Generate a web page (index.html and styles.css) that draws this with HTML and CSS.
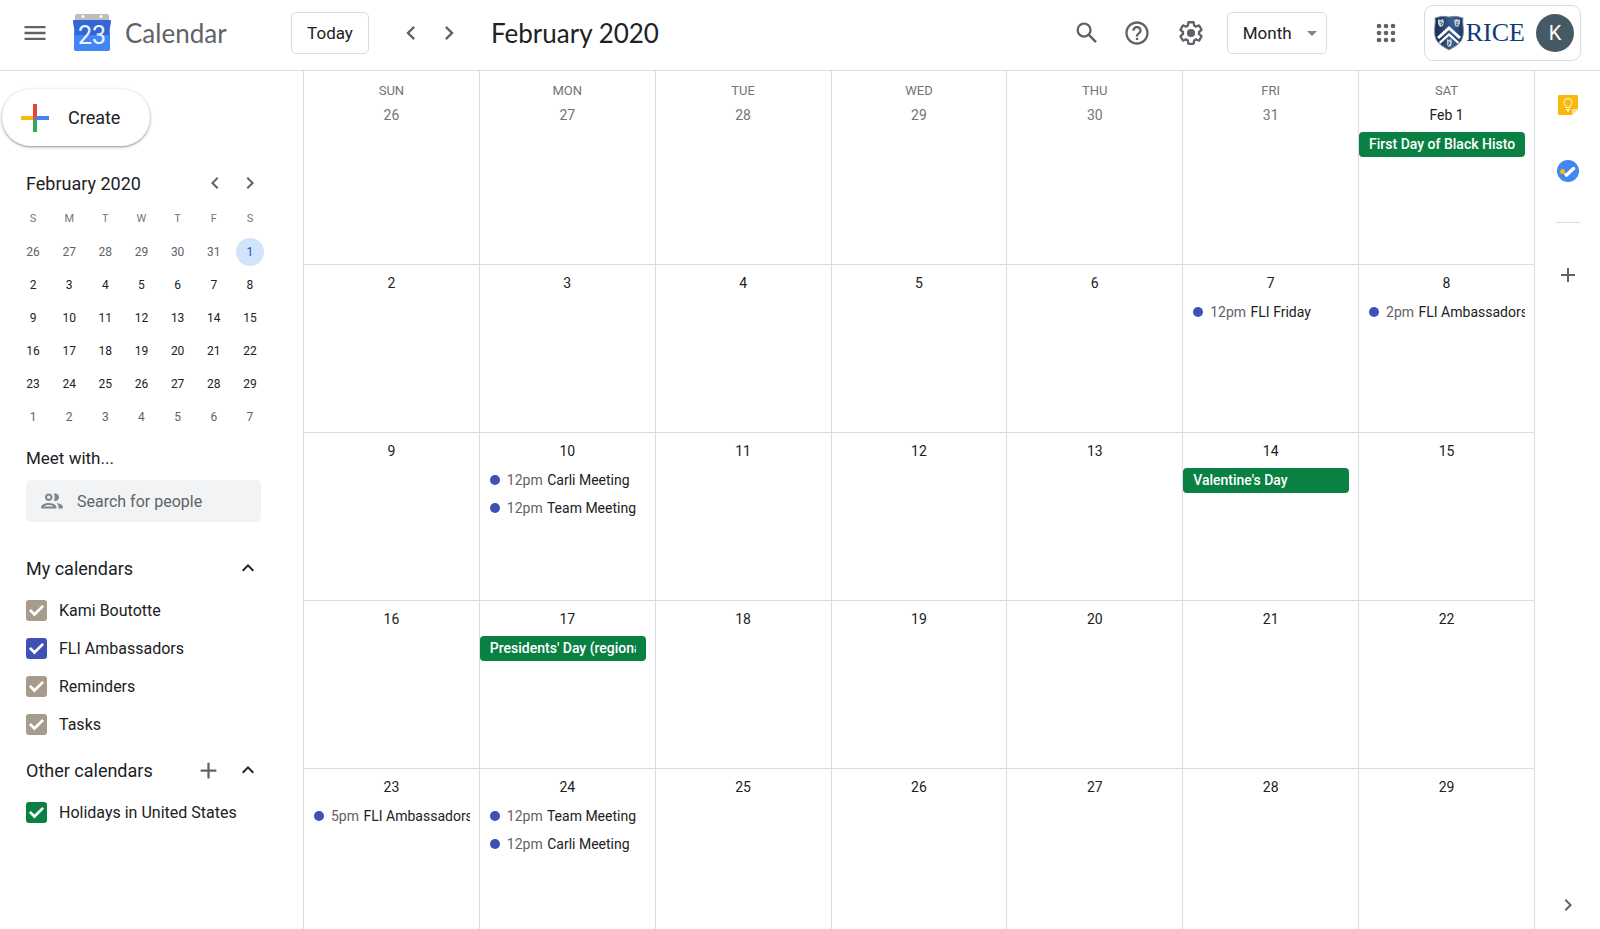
FILE: index.html
```html
<!DOCTYPE html>
<html lang="en">

<head>
    <meta charset="UTF-8">
    <meta name="viewport" content="width=device-width, initial-scale=1.0">
    <title>Calendar - February 2020</title>
    <link rel="stylesheet" href="styles.css">
</head>

<body>

    <header class="topbar">
        <div class="brand">
            <button class="icon-btn" aria-label="Main menu">
                <svg width="28" height="28" viewBox="0 0 24 24"><path d="M3 18h18v-2H3v2zm0-5h18v-2H3v2zm0-7v2h18V6H3z"/></svg>
            </button>
            <svg class="logo" width="40" height="40" viewBox="0 0 40 40">
                <path d="M5 1h30a2 2 0 0 1 2 2v6H3V3a2 2 0 0 1 2-2z" fill="#bdbdbd"/>
                <circle cx="11" cy="3.500" r="1.500" fill="#fff"/>
                <circle cx="29" cy="3.500" r="1.500" fill="#fff"/>
                <path d="M2 7h36a1 1 0 0 1 1 1c0 4-2 7-1 14H2C3 15 1 12 1 8a1 1 0 0 1 1-1z" fill="#3367d6"/>
                <path d="M2 22h36v14a2 2 0 0 1-2 2H4a2 2 0 0 1-2-2z" fill="#4285f4"/>
                <text class="logo-day" x="20" y="31" text-anchor="middle">23</text>
            </svg>
            <span class="brand-name">Calendar</span>
        </div>

        <button class="box-btn">Today</button>
        <div class="pager">
            <button class="icon-btn" aria-label="Previous month">
                <svg width="28" height="28" viewBox="0 0 24 24"><path d="M15.410 7.410L14 6l-6 6 6 6 1.410-1.410L10.830 12z"/></svg>
            </button>
            <button class="icon-btn" aria-label="Next month">
                <svg width="28" height="28" viewBox="0 0 24 24"><path d="M10 6L8.590 7.410 13.170 12l-4.580 4.590L10 18l6-6z"/></svg>
            </button>
        </div>
        <h1>February 2020</h1>

        <div class="tools">
            <button class="icon-btn" aria-label="Search">
                <svg width="28" height="28" viewBox="0 0 24 24"><path d="M20.490 19l-5.730-5.730C15.530 12.200 16 10.910 16 9.500A6.500 6.500 0 1 0 9.500 16c1.410 0 2.700-.47 3.770-1.240L19 20.490 20.490 19zM5 9.500C5 7.010 7.010 5 9.500 5S14 7.010 14 9.500 11.990 14 9.500 14 5 11.990 5 9.500z"/></svg>
            </button>
            <button class="icon-btn" aria-label="Support">
                <svg width="28" height="28" viewBox="0 0 24 24"><path d="M11 18h2v-2h-2v2zm1-16C6.480 2 2 6.480 2 12s4.480 10 10 10 10-4.480 10-10S17.520 2 12 2zm0 18c-4.410 0-8-3.590-8-8s3.590-8 8-8 8 3.590 8 8-3.590 8-8 8zm0-14c-2.210 0-4 1.790-4 4h2c0-1.100.9-2 2-2s2 .9 2 2c0 2-3 1.750-3 5h2c0-2.250 3-2.500 3-5 0-2.210-1.790-4-4-4z"/></svg>
            </button>
            <button class="icon-btn settings" aria-label="Settings">
                <svg width="28" height="28" viewBox="0 0 24 24"><path d="M13.850 22.250h-3.700c-.74 0-1.360-.54-1.450-1.270l-.27-1.890c-.27-.14-.53-.29-.79-.46l-1.800.72c-.7.26-1.470-.03-1.810-.65L2.200 15.530c-.35-.66-.2-1.440.36-1.880l1.530-1.190c-.01-.15-.02-.3-.02-.46 0-.15.01-.31.02-.46l-1.520-1.190c-.59-.45-.74-1.260-.37-1.880l1.850-3.190c.34-.62 1.110-.9 1.790-.63l1.810.73c.26-.17.52-.32.78-.46l.27-1.910c.09-.7.71-1.250 1.440-1.250h3.700c.74 0 1.360.54 1.450 1.270l.27 1.890c.27.14.53.29.79.46l1.800-.72c.71-.26 1.480.03 1.820.65l1.840 3.180c.36.66.2 1.440-.36 1.880l-1.520 1.190c.01.15.02.3.02.46s-.01.31-.02.46l1.520 1.190c.56.45.72 1.230.37 1.860l-1.860 3.220c-.34.62-1.110.9-1.800.63l-1.800-.72c-.26.17-.52.32-.78.46l-.27 1.910c-.1.68-.72 1.220-1.460 1.220zm-3.230-2h2.760l.37-2.550.53-.22c.44-.18.88-.44 1.340-.78l.45-.34 2.380.96 1.380-2.400-2.030-1.580.07-.56c.03-.26.06-.51.06-.78s-.03-.53-.06-.78l-.07-.56 2.030-1.580-1.390-2.400-2.390.96-.45-.35c-.42-.32-.87-.58-1.330-.77l-.52-.22-.37-2.550h-2.760l-.37 2.550-.53.21c-.44.19-.88.44-1.340.79l-.45.33-2.380-.95-1.390 2.390 2.030 1.580-.07.56a7 7 0 0 0-.06.79c0 .26.02.53.06.78l.07.56-2.030 1.580 1.380 2.400 2.390-.96.45.35c.43.33.86.58 1.330.77l.53.22.38 2.550z"/><circle cx="12" cy="12" r="3.500"/></svg>
            </button>
            <div class="view-select">
                <select aria-label="View">
                    <option>Day</option>
                    <option>Week</option>
                    <option selected>Month</option>
                    <option>Year</option>
                </select>
                <svg width="10" height="5" viewBox="0 0 10 5"><path d="M0 0h10L5 5z"/></svg>
            </div>
            <button class="icon-btn apps" aria-label="Apps">
                <svg width="28" height="28" viewBox="0 0 24 24"><circle cx="6" cy="6" r="2"/><circle cx="12" cy="6" r="2"/><circle cx="18" cy="6" r="2"/><circle cx="6" cy="12" r="2"/><circle cx="12" cy="12" r="2"/><circle cx="18" cy="12" r="2"/><circle cx="6" cy="18" r="2"/><circle cx="12" cy="18" r="2"/><circle cx="18" cy="18" r="2"/></svg>
            </button>
            <a class="account" href="#">
                <svg width="30" height="36" viewBox="0 0 30 36">
                    <defs>
                        <linearGradient id="shield" x1="0" y1="0" x2="1" y2="0">
                            <stop offset="0" stop-color="#16294f"/>
                            <stop offset=".6" stop-color="#3b5f8f"/>
                            <stop offset="1" stop-color="#1d3560"/>
                        </linearGradient>
                    </defs>
                    <path d="M1 3Q8 0 15 2Q22 0 29 3C28 9 31 17 28 24C26 29 20 32 15 35C10 32 4 29 2 24C-1 17 2 9 1 3z" fill="url(#shield)" stroke="#7d8ba3"/>
                    <path d="M3 22L15 11L27 22L25 24L15 15L5 24z" fill="#fff"/>
                    <path d="M5 27L15 18L25 27L24 29L15 21L6 29z" fill="#fff"/>
                    <path d="M4 4l2 1 3-1 1 3-1 4-3 1-2-3zM20 5l3-1 2 1 1-1 0 4-2 4-3-1zM13 24l2 1 2-1 1 3-1 4-2 1-2-2z" fill="#c3c9d2"/>
                    <path d="M6 7l2 1M7 10l2-2M22 8l2-1M22 10l2-1M14 27l2 1M14 30l2-2" stroke="#3c4b66" fill="none"/>
                </svg>
                <span class="school">RICE</span>
                <span class="avatar">K</span>
            </a>
        </div>
    </header>

    <div class="page">

        <aside class="sidebar">
            <button class="create">
                <svg width="28" height="28" viewBox="0 0 28 28">
                    <path d="M12 0h4v12l-4 4z" fill="#ea4335"/>
                    <path d="M0 12h12v4H0z" fill="#fbbc04"/>
                    <path d="M12 16l4-4v16h-4z" fill="#34a853"/>
                    <path d="M16 12h12v4H12z" fill="#4285f4"/>
                    <path d="M12 12h4l-4 4z" fill="#ea4335"/>
                </svg>
                Create
            </button>

            <div class="side-head mini-head">
                <h2>February 2020</h2>
                <button class="icon-btn" aria-label="Previous month">
                    <svg width="24" height="24" viewBox="0 0 24 24"><path d="M15.410 7.410L14 6l-6 6 6 6 1.410-1.410L10.830 12z"/></svg>
                </button>
                <button class="icon-btn" aria-label="Next month">
                    <svg width="24" height="24" viewBox="0 0 24 24"><path d="M10 6L8.590 7.410 13.170 12l-4.580 4.590L10 18l6-6z"/></svg>
                </button>
            </div>

            <table class="mini">
                <thead>
                    <tr><th>S</th><th>M</th><th>T</th><th>W</th><th>T</th><th>F</th><th>S</th></tr>
                </thead>
                <tbody>
                    <tr><td class="other">26</td><td class="other">27</td><td class="other">28</td><td class="other">29</td><td class="other">30</td><td class="other">31</td><td><span class="picked">1</span></td></tr>
                    <tr><td>2</td><td>3</td><td>4</td><td>5</td><td>6</td><td>7</td><td>8</td></tr>
                    <tr><td>9</td><td>10</td><td>11</td><td>12</td><td>13</td><td>14</td><td>15</td></tr>
                    <tr><td>16</td><td>17</td><td>18</td><td>19</td><td>20</td><td>21</td><td>22</td></tr>
                    <tr><td>23</td><td>24</td><td>25</td><td>26</td><td>27</td><td>28</td><td>29</td></tr>
                    <tr><td class="other">1</td><td class="other">2</td><td class="other">3</td><td class="other">4</td><td class="other">5</td><td class="other">6</td><td class="other">7</td></tr>
                </tbody>
            </table>

            <label class="meet" for="people">Meet with...</label>
            <div class="people">
                <svg width="26" height="26" viewBox="0 0 24 24"><path d="M9 13.750c-2.340 0-7 1.170-7 3.500V19h14v-1.750c0-2.330-4.660-3.500-7-3.500zM4.340 17c.84-.58 2.870-1.250 4.660-1.250s3.820.67 4.660 1.250H4.340zM9 12c1.930 0 3.500-1.570 3.500-3.500S10.930 5 9 5 5.500 6.570 5.500 8.500 7.070 12 9 12zm0-5c.83 0 1.500.67 1.500 1.500S9.830 10 9 10s-1.500-.67-1.500-1.500S8.170 7 9 7zm7.040 6.810c1.160.84 1.960 1.960 1.960 3.440V19h4v-1.750c0-2.020-3.500-3.170-5.960-3.440zM15 12c1.930 0 3.500-1.570 3.500-3.500S16.930 5 15 5c-.54 0-1.040.13-1.500.35.63.89 1 1.980 1 3.150s-.37 2.260-1 3.150c.46.22.96.35 1.500.35z"/></svg>
                <input type="text" id="people" placeholder="Search for people">
            </div>

            <div class="side-head">
                <h2>My calendars</h2>
                <button class="icon-btn dark" aria-label="Collapse my calendars">
                    <svg width="24" height="24" viewBox="0 0 24 24"><path d="M12 8l-6 6 1.410 1.410L12 10.830l4.590 4.580L18 14z"/></svg>
                </button>
            </div>
            <ul class="calendars">
                <li><label><input type="checkbox" class="tan" checked>Kami Boutotte</label></li>
                <li><label><input type="checkbox" class="blue" checked>FLI Ambassadors</label></li>
                <li><label><input type="checkbox" class="tan" checked>Reminders</label></li>
                <li><label><input type="checkbox" class="tan" checked>Tasks</label></li>
            </ul>

            <div class="side-head">
                <h2>Other calendars</h2>
                <button class="icon-btn" aria-label="Add other calendars">
                    <svg width="27" height="27" viewBox="0 0 24 24"><path d="M19 13h-6v6h-2v-6H5v-2h6V5h2v6h6v2z"/></svg>
                </button>
                <button class="icon-btn dark" aria-label="Collapse other calendars">
                    <svg width="24" height="24" viewBox="0 0 24 24"><path d="M12 8l-6 6 1.410 1.410L12 10.830l4.590 4.580L18 14z"/></svg>
                </button>
            </div>
            <ul class="calendars">
                <li><label><input type="checkbox" class="green" checked>Holidays in United States</label></li>
            </ul>
        </aside>

        <main>
            <table class="month">
                <thead>
                    <tr><th>SUN</th><th>MON</th><th>TUE</th><th>WED</th><th>THU</th><th>FRI</th><th>SAT</th></tr>
                </thead>
                <tbody>
                    <tr>
                        <td><div class="day other">26</div></td>
                        <td><div class="day other">27</div></td>
                        <td><div class="day other">28</div></td>
                        <td><div class="day other">29</div></td>
                        <td><div class="day other">30</div></td>
                        <td><div class="day other">31</div></td>
                        <td>
                            <div class="day">Feb 1</div>
                            <a class="holiday" href="#"><span>First Day of Black History Month</span></a>
                        </td>
                    </tr>
                    <tr>
                        <td><div class="day">2</div></td>
                        <td><div class="day">3</div></td>
                        <td><div class="day">4</div></td>
                        <td><div class="day">5</div></td>
                        <td><div class="day">6</div></td>
                        <td>
                            <div class="day">7</div>
                            <a class="event" href="#"><span class="time">12pm</span> FLI Friday</a>
                        </td>
                        <td>
                            <div class="day">8</div>
                            <a class="event" href="#"><span class="time">2pm</span> FLI Ambassadors</a>
                        </td>
                    </tr>
                    <tr>
                        <td><div class="day">9</div></td>
                        <td>
                            <div class="day">10</div>
                            <a class="event" href="#"><span class="time">12pm</span> Carli Meeting</a>
                            <a class="event" href="#"><span class="time">12pm</span> Team Meeting</a>
                        </td>
                        <td><div class="day">11</div></td>
                        <td><div class="day">12</div></td>
                        <td><div class="day">13</div></td>
                        <td>
                            <div class="day">14</div>
                            <a class="holiday" href="#"><span>Valentine's Day</span></a>
                        </td>
                        <td><div class="day">15</div></td>
                    </tr>
                    <tr>
                        <td><div class="day">16</div></td>
                        <td>
                            <div class="day">17</div>
                            <a class="holiday" href="#"><span>Presidents' Day (regional holiday)</span></a>
                        </td>
                        <td><div class="day">18</div></td>
                        <td><div class="day">19</div></td>
                        <td><div class="day">20</div></td>
                        <td><div class="day">21</div></td>
                        <td><div class="day">22</div></td>
                    </tr>
                    <tr>
                        <td>
                            <div class="day">23</div>
                            <a class="event" href="#"><span class="time">5pm</span> FLI Ambassadors</a>
                        </td>
                        <td>
                            <div class="day">24</div>
                            <a class="event" href="#"><span class="time">12pm</span> Team Meeting</a>
                            <a class="event" href="#"><span class="time">12pm</span> Carli Meeting</a>
                        </td>
                        <td><div class="day">25</div></td>
                        <td><div class="day">26</div></td>
                        <td><div class="day">27</div></td>
                        <td><div class="day">28</div></td>
                        <td><div class="day">29</div></td>
                    </tr>
                </tbody>
            </table>
        </main>

        <nav class="rail" aria-label="Side panel">
            <button class="icon-btn" aria-label="Keep">
                <svg width="20" height="20" viewBox="0 0 20 20">
                    <path d="M1 0h18a1 1 0 0 1 1 1v13l-6 6H1a1 1 0 0 1-1-1V1a1 1 0 0 1 1-1z" fill="#f9b90b"/>
                    <path d="M14 20v-5a1 1 0 0 1 1-1h5z" fill="#fde293"/>
                    <path d="M8 12.500v-1.500a4 4 0 1 1 4 0v1.500zM8 14.500h4M9 16h2" fill="none" stroke="#fff"/>
                </svg>
            </button>
            <button class="icon-btn" aria-label="Tasks">
                <svg width="22" height="22" viewBox="0 0 22 22">
                    <circle cx="11" cy="11" r="11" fill="#4285f4"/>
                    <path d="M9.500 15L16.500 8.500" stroke="#fff" stroke-width="3.500" stroke-linecap="round"/>
                    <path d="M9.500 15.500L8 14" stroke="#fff" stroke-width="2" stroke-linecap="round"/>
                    <circle cx="5.500" cy="11.500" r="2.500" fill="#fbbc04"/>
                </svg>
            </button>
            <hr>
            <button class="icon-btn" aria-label="Get add-ons">
                <svg width="24" height="24" viewBox="0 0 24 24"><path d="M19 13h-6v6h-2v-6H5v-2h6V5h2v6h6v2z"/></svg>
            </button>
            <button class="icon-btn hide" aria-label="Hide side panel">
                <svg width="24" height="24" viewBox="0 0 24 24"><path d="M10 6L8.590 7.410 13.170 12l-4.580 4.590L10 18l6-6z"/></svg>
            </button>
        </nav>

    </div>

</body>

</html>
```
FILE: styles.css
```css
* {
    box-sizing: border-box;
}

body {
    margin: 0;
    min-height: 100vh;
    display: flex;
    flex-direction: column;
    font-family: Roboto, "Liberation Sans", sans-serif;
    font-size: 14px;
    color: #202124;
    background-color: #fff;
}

h1,
h2 {
    margin: 0;
    font-weight: 400;
}

button,
input,
select {
    font-family: inherit;
    color: inherit;
}

a {
    color: inherit;
    text-decoration: none;
}

svg {
    display: block;
    flex: none;
}

table {
    border-spacing: 0;
    table-layout: fixed;
}

th,
td {
    padding: 0;
    font-weight: 400;
}

.icon-btn {
    display: flex;
    align-items: center;
    justify-content: center;
    padding: 0;
    border: none;
    background: none;
    fill: #5f6368;
    cursor: pointer;
}

.icon-btn.dark {
    fill: #202124;
}

/* Top bar */
.topbar {
    display: flex;
    align-items: center;
    height: 71px;
    padding: 0 19px 4px 21px;
    border-bottom: 1px solid #dadce0;
}

.brand {
    display: flex;
    align-items: center;
    width: 270px;
}

.logo {
    margin: 0 13px 0 23px;
}

.logo-day {
    font-size: 25px;
    fill: #eef3fd;
}

.brand-name {
    font-family: Lato, sans-serif;
    font-size: 26px;
    color: #5f6368;
}

.box-btn,
.view-select select {
    height: 42px;
    border: 1px solid #dadce0;
    border-radius: 5px;
    background-color: #fff;
    font-size: 17px;
}

.box-btn {
    width: 78px;
    padding: 0;
}

.pager {
    display: flex;
    gap: 10px;
    margin: 0 28px;
}

.topbar h1 {
    font-family: Lato, sans-serif;
    font-size: 26px;
}

.tools {
    display: flex;
    align-items: center;
    margin-left: auto;
    gap: 22px;
}

.tools .settings {
    margin-left: 4px;
}

.view-select {
    position: relative;
}

.view-select select {
    width: 100px;
    padding: 0 15px;
    appearance: none;
}

.view-select svg {
    position: absolute;
    right: 10px;
    top: 19px;
    fill: #80868b;
    pointer-events: none;
}

.apps {
    margin: 0 2px 0 23px;
}

.account {
    display: flex;
    align-items: center;
    height: 56px;
    padding: 0 6px 0 9px;
    border: 1px solid #dadce0;
    border-radius: 9px;
}

.school {
    flex: 1;
    margin: 0 11px 0 2px;
    font-family: "Liberation Serif", serif;
    font-size: 26px;
    color: #10397a;
}

.avatar {
    width: 38px;
    height: 38px;
    border-radius: 50%;
    background-color: #455a64;
    color: #fff;
    font-size: 20px;
    line-height: 38px;
    text-align: center;
}

.page {
    flex: 1;
    display: flex;
}

/* Sidebar */
.sidebar {
    flex: none;
    width: 303px;
    padding: 18px 42px 0 26px;
}

.create {
    display: flex;
    align-items: center;
    gap: 19px;
    height: 57px;
    margin-left: -24px;
    padding: 0 30px 0 19px;
    border: none;
    border-radius: 29px;
    background-color: #fff;
    box-shadow: 0 1px 2px rgba(60, 64, 67, .4), 0 1px 3px 1px rgba(60, 64, 67, .15);
    font-size: 18px;
}

.side-head {
    display: flex;
    align-items: center;
    height: 38px;
    padding-right: 1px;
    gap: 14px;
}

.side-head h2 {
    flex: 1;
    font-size: 18px;
}

.mini-head {
    margin-top: 18px;
    margin-right: -1px;
    padding-right: 0;
    gap: 11px;
}

.mini {
    width: 253px;
    margin-left: -11px;
    font-size: 12px;
    text-align: center;
}

.mini tr {
    height: 33px;
}

.mini th {
    font-size: 11px;
    color: #70757a;
}

.mini .other {
    color: #5f6368;
}

.picked {
    display: block;
    width: 28px;
    margin: 0 auto;
    border-radius: 50%;
    background-color: #d2e3fc;
    color: #185abc;
    line-height: 28px;
}

.meet {
    display: block;
    margin-top: 13px;
    font-size: 17px;
    line-height: 24px;
}

.people {
    display: flex;
    align-items: center;
    height: 42px;
    margin: 10px 0 27px;
    padding-left: 13px;
    gap: 12px;
    border-radius: 5px;
    background-color: #f1f3f4;
    fill: #80868b;
}

.people input {
    flex: 1;
    min-width: 0;
    padding: 0;
    border: none;
    background: none;
    font-size: 16px;
}

.people input::placeholder {
    color: #5f6368;
    opacity: 1;
}

.calendars {
    margin: 0 0 8px;
    padding: 4px 0 0;
    list-style: none;
    font-size: 16px;
}

.calendars label {
    display: flex;
    align-items: center;
    height: 38px;
    gap: 12px;
}

.calendars input {
    appearance: none;
    width: 21px;
    height: 21px;
    margin: 0;
    border-radius: 3px;
}

.calendars input:checked::before {
    content: "";
    display: block;
    width: 21px;
    height: 21px;
    background-color: #fff;
    clip-path: polygon(14% 54%, 23% 45%, 40% 62%, 77% 26%, 86% 35%, 40% 81%);
}

.tan {
    background-color: #a79b8e;
}

.blue {
    background-color: #3f51b5;
}

.green {
    background-color: #0b8043;
}

/* Month grid */
main {
    flex: 1;
    min-width: 0;
    display: flex;
}

.month {
    width: 100%;
}

.month th {
    height: 26px;
    padding-top: 14px;
    border-left: 1px solid #dadce0;
    font-size: 13px;
    line-height: 12px;
    color: #70757a;
}

.month td {
    height: 168px;
    padding: 8px 9px 0 0;
    border-left: 1px solid #dadce0;
    border-bottom: 1px solid #dadce0;
    vertical-align: top;
}

.month tr:last-child td {
    height: auto;
    border-bottom: none;
}

.day {
    margin: 0 -9px 7px 0;
    font-size: 14px;
    line-height: 20px;
    text-align: center;
}

.day.other {
    color: #70757a;
}

.holiday,
.event {
    display: block;
    height: 25px;
    margin-bottom: 3px;
    font-size: 14px;
    line-height: 25px;
    white-space: nowrap;
    overflow: hidden;
}

.holiday {
    padding: 0 10px;
    border-radius: 4px;
    background-color: #0b8043;
    color: #fff;
    font-weight: 500;
}

.holiday span {
    display: block;
    overflow: hidden;
}

.event::before {
    content: "";
    display: inline-block;
    width: 10px;
    height: 10px;
    margin: 0 7px 0 10px;
    border-radius: 50%;
    background-color: #3f51b5;
}

.time {
    margin-right: 1px;
    color: #5f6368;
}

/* Side panel */
.rail {
    display: flex;
    flex-direction: column;
    align-items: center;
    width: 66px;
    padding: 24px 0 12px;
    border-left: 1px solid #dadce0;
}

.rail .icon-btn + .icon-btn {
    margin-top: 45px;
}

.rail hr {
    width: 24px;
    margin: 40px 0;
    border: none;
    border-top: 1px solid #dadce0;
}

.rail .hide.icon-btn {
    margin-top: auto;
}
```
